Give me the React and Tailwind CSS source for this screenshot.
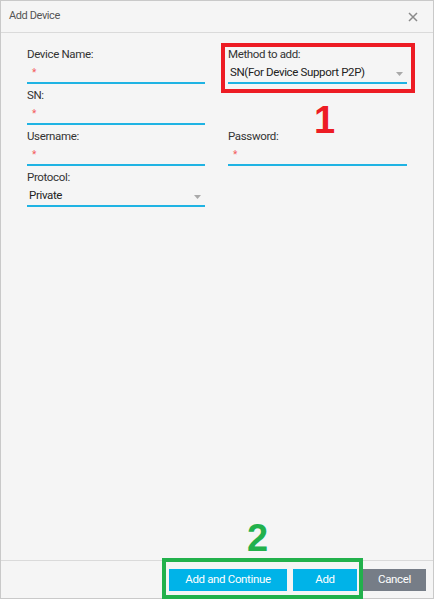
import { useState } from 'react';

const Field = ({ label, children }) => (
  <div className="flex flex-col">
    <div className="h-[16px] leading-[16px] text-[11.5px] tracking-[-0.35px] text-[#333]">{label}</div>
    <div className="h-[22px] border-b-2 border-[#1fb3e3] flex items-center pl-[5px] pb-[1px]">{children}</div>
  </div>
);

const Required = () => (
  <span className="text-[#f45b5b] text-[10px] leading-none mt-[2px]">*</span>
);

const Caret = () => (
  <svg width="7" height="4" viewBox="0 0 7 4" className="ml-auto mr-[1px] mt-[2px]">
    <polygon points="0,0 7,0 3.5,4" fill="#a9a9a9" />
  </svg>
);

const Select = ({ value }) => (
  <div className="flex items-center w-full -ml-[3px] pt-[3px]">
    <span className="text-[11.5px] tracking-[-0.35px] text-[#222] leading-none">{value}</span>
    <Caret />
  </div>
);

export default function App() {
  const [method] = useState('SN(For Device Support P2P)');
  const [protocol] = useState('Private');

  return (
    <div className="relative w-[434px] h-[599px] border border-[#c9c9c9] bg-[#f5f5f5] flex flex-col font-[Roboto,'Liberation_Sans',sans-serif]">
      {/* Header */}
      <div className="h-[32px] shrink-0 border-b border-[#dadada] flex items-center pl-[8px] pr-[15px]">
        <span className="text-[11px] tracking-[-0.4px] text-[#555]">Add Device</span>
        <button className="ml-auto" title="Close">
          <svg width="10" height="10" viewBox="0 0 10 10">
            <path d="M1 1 L9 9 M9 1 L1 9" stroke="#8a8a8a" strokeWidth="1.5" />
          </svg>
        </button>
      </div>

      {/* Form */}
      <div className="flex-1 pt-[13px] pl-[26px]">
        <div className="grid grid-cols-[178px_179px] gap-x-[23px] gap-y-[3px]">
          <Field label="Device Name:"><Required /></Field>
          <Field label="Method to add:"><Select value={method} /></Field>
          <Field label="SN:"><Required /></Field>
          <div />
          <Field label="Username:"><Required /></Field>
          <Field label="Password:"><Required /></Field>
          <Field label="Protocol:"><Select value={protocol} /></Field>
          <div />
        </div>
      </div>

      {/* Footer */}
      <div className="h-[38px] shrink-0 border-t border-[#dadada] flex items-center justify-end gap-[6px] pr-[7px]">
        <button className="w-[118px] h-[22px] bg-[#00b3e8] text-white text-[11.5px] tracking-[-0.35px]">Add and Continue</button>
        <button className="w-[64px] h-[22px] bg-[#00b3e8] text-white text-[11.5px] tracking-[-0.35px]">Add</button>
        <button className="w-[63px] h-[22px] bg-[#767d87] text-white text-[11.5px] tracking-[-0.35px]">Cancel</button>
      </div>

      {/* Annotations */}
      <div className="absolute left-[220px] top-[42px] w-[194px] h-[50px] border-4 border-[#ed1c24] pointer-events-none" />
      <div className="absolute left-[313px] top-[100px] text-[38px] leading-none font-bold text-[#ed1c24] font-['Liberation_Sans',Arial,sans-serif]">1</div>
      <div className="absolute left-[161px] top-[557px] w-[201px] h-[41px] border-4 border-[#22b14c] pointer-events-none" />
      <div className="absolute left-[246px] top-[518px] text-[38px] leading-none font-bold text-[#22b14c] font-['Liberation_Sans',Arial,sans-serif]">2</div>
    </div>
  );
}
